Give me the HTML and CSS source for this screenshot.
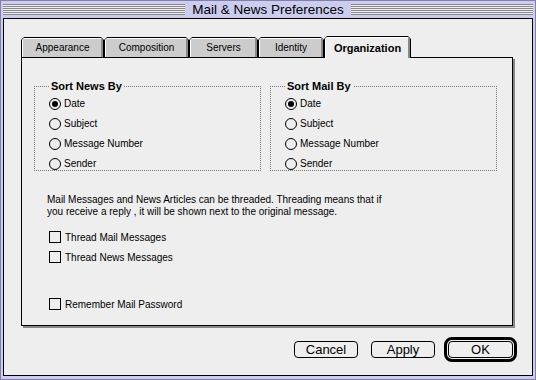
FILE: index.html
```html
<!DOCTYPE html>
<html lang="en">
<head>
    <meta charset="UTF-8">
    <title>Mail &amp; News Preferences</title>
    <link rel="stylesheet" href="styles.css">
</head>
<body>
    <div class="window">
        <div class="title-bar">
            <span class="stripes"></span>
            <span class="title">Mail &amp; News Preferences</span>
            <span class="stripes"></span>
        </div>
        <div class="content">
            <ul class="tabs">
                <li class="tab tab-appearance"><span class="tab-face">Appearance</span></li>
                <li class="tab tab-composition"><span class="tab-face">Composition</span></li>
                <li class="tab tab-servers"><span class="tab-face">Servers</span></li>
                <li class="tab tab-identity"><span class="tab-face">Identity</span></li>
                <li class="tab tab-active"><span class="tab-face">Organization</span></li>
            </ul>
            <div class="panel">
                <div class="groups">
                    <fieldset class="group">
                        <legend>Sort News By</legend>
                        <div class="option"><span class="radio on"></span>Date</div>
                        <div class="option"><span class="radio"></span>Subject</div>
                        <div class="option"><span class="radio"></span>Message Number</div>
                        <div class="option"><span class="radio"></span>Sender</div>
                    </fieldset>
                    <fieldset class="group">
                        <legend>Sort Mail By</legend>
                        <div class="option"><span class="radio on"></span>Date</div>
                        <div class="option"><span class="radio"></span>Subject</div>
                        <div class="option"><span class="radio"></span>Message Number</div>
                        <div class="option"><span class="radio"></span>Sender</div>
                    </fieldset>
                </div>
                <p class="note">Mail Messages and News Articles can be threaded. Threading means that if<br>you receive a reply , it will be shown next to the original message.</p>
                <div class="check-list">
                    <div class="check"><span class="box"></span>Thread Mail Messages</div>
                    <div class="check"><span class="box"></span>Thread News Messages</div>
                    <div class="check check-remember"><span class="box"></span>Remember Mail Password</div>
                </div>
            </div>
            <div class="buttons">
                <button class="btn btn-cancel">Cancel</button>
                <button class="btn btn-apply">Apply</button>
                <span class="default-ring"><button class="btn btn-ok">OK</button></span>
            </div>
        </div>
    </div>
</body>
</html>
```

FILE: styles.css
```css
/* Base */
body {
    margin: 0;
    font-family: 'Liberation Sans', Arial, sans-serif;
    font-size: 10px;
    color: #000;
    background: #ccccee;
}

/* Window frame */
.window {
    width: 536px;
    height: 380px;
    box-sizing: border-box;
    border: 1px solid #8080aa;
    padding: 0 2px 3px 2px;
    background: #ccccee;
    display: flex;
    flex-direction: column;
}

.title-bar {
    height: 17px;
    display: flex;
    align-items: center;
}

.stripes {
    flex: 1;
    height: 11px;
    background: repeating-linear-gradient(to bottom, #888 0, #888 1px, #eeeef6 1px, #eeeef6 2px);
}

.title {
    padding: 0 7px;
    font-size: 13.5px;
    line-height: 15px;
}

.content {
    flex: 1;
    border: 1px solid #000;
    background: #eeeeee;
    padding: 17px 15px 0 17px;
}

/* Tabs */
.tabs {
    list-style: none;
    margin: 0;
    padding: 0;
    display: flex;
    align-items: flex-end;
}

.tab {
    height: 20px;
    box-sizing: border-box;
    padding: 1px 1px 0 1px;
    background: #000;
    clip-path: polygon(3px 0, calc(100% - 3px) 0, 100% 3px, 100% 100%, 0 100%, 0 3px);
}

.tab-face {
    height: 100%;
    display: flex;
    align-items: center;
    justify-content: center;
    background: #cccccc;
    clip-path: polygon(2px 0, calc(100% - 2px) 0, 100% 2px, 100% 100%, 0 100%, 0 2px);
    box-shadow: inset -2px 0 #888, inset 1px 1px #fff;
}

.tab-appearance { width: 83px; }
.tab-composition { width: 85px; }
.tab-servers { width: 69px; }
.tab-identity { width: 66px; }

.tab-active {
    width: 87px;
    height: 22px;
    margin-bottom: -1px;
    position: relative;
    z-index: 1;
}

.tab-active .tab-face {
    background: #eeeeee;
    font-size: 11px;
    font-weight: bold;
    padding-top: 1px;
    box-sizing: border-box;
}

/* Panel */
.panel {
    width: 492px;
    height: 269px;
    box-sizing: border-box;
    border: 1px solid #000;
    box-shadow: 2px 2px 0 #888;
    padding: 22px 0 0 12px;
}

.groups {
    display: flex;
    gap: 9px;
}

.group {
    width: 227px;
    box-sizing: border-box;
    margin: 0;
    padding: 4px 0 0 14px;
    border: 1px dotted #777;
}

.group legend {
    padding: 0 2px;
    font-size: 11px;
    font-weight: bold;
    line-height: 13px;
}

.option {
    display: flex;
    align-items: center;
    gap: 3px;
    height: 13px;
}

.option + .option {
    margin-top: 7px;
}

.radio {
    width: 12px;
    height: 12px;
    box-sizing: border-box;
    border: 1px solid #000;
    border-radius: 50%;
    display: inline-flex;
    align-items: center;
    justify-content: center;
}

.radio.on::after {
    content: '';
    width: 6px;
    height: 6px;
    border-radius: 50%;
    background: #000;
}

.note {
    margin: 23px 0 0 13px;
    line-height: 12px;
}

.check-list {
    margin: 12px 0 0 15px;
}

.check {
    display: flex;
    align-items: center;
    gap: 4px;
    height: 14px;
}

.check + .check {
    margin-top: 6px;
}

.check.check-remember {
    margin-top: 33px;
}

.box {
    width: 12px;
    height: 12px;
    box-sizing: border-box;
    border: 1px solid #000;
}

/* Buttons */
.buttons {
    display: flex;
    justify-content: flex-end;
    align-items: center;
    margin-top: 11px;
}

.btn {
    width: 64px;
    height: 17px;
    padding: 0;
    border: 1px solid #000;
    border-radius: 4px;
    background: #eeeeee;
    font: 13px 'Liberation Sans', Arial, sans-serif;
    line-height: 15px;
    color: #000;
}

.btn-cancel {
    margin-right: 13px;
}

.btn-apply {
    margin-right: 9px;
}

.default-ring {
    display: flex;
    padding: 1px;
    border: 3px solid #000;
    border-radius: 8px;
}

.btn-ok {
    width: 65px;
}
```
